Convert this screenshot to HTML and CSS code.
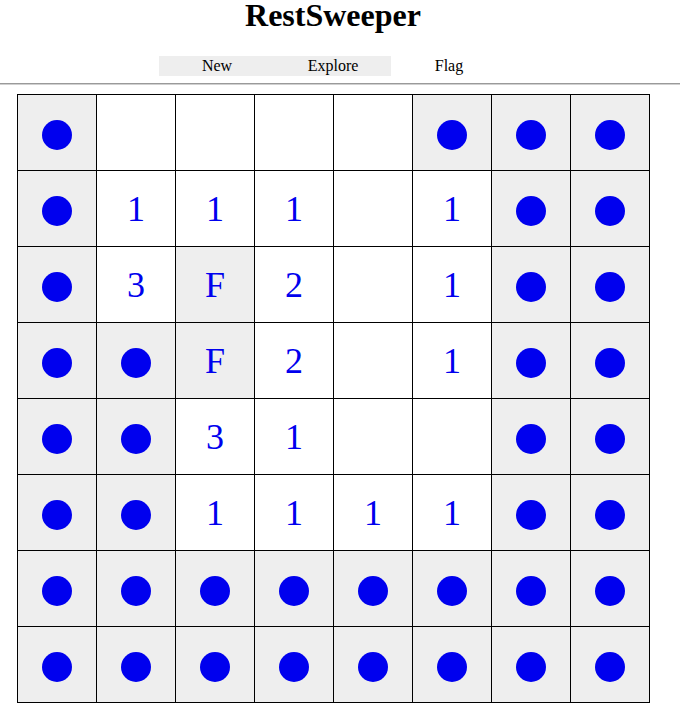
FILE: index.html
```html
<!DOCTYPE html>
<html>
<head>
<meta charset="utf-8">
<title>RestSweeper</title>
<link rel="stylesheet" href="styles.css">
</head>
<body>
<header class="top">
  <h1 class="title">RestSweeper</h1>
  <nav class="actions">
    <button class="btn btn-on">New</button>
    <button class="btn btn-on">Explore</button>
    <button class="btn">Flag</button>
  </nav>
</header>
<hr class="rule">
<main class="board">
  <div class="cell covered"><span class="dot"></span></div>
  <div class="cell"></div>
  <div class="cell"></div>
  <div class="cell"></div>
  <div class="cell"></div>
  <div class="cell covered"><span class="dot"></span></div>
  <div class="cell covered"><span class="dot"></span></div>
  <div class="cell covered"><span class="dot"></span></div>

  <div class="cell covered"><span class="dot"></span></div>
  <div class="cell">1</div>
  <div class="cell">1</div>
  <div class="cell">1</div>
  <div class="cell"></div>
  <div class="cell">1</div>
  <div class="cell covered"><span class="dot"></span></div>
  <div class="cell covered"><span class="dot"></span></div>

  <div class="cell covered"><span class="dot"></span></div>
  <div class="cell">3</div>
  <div class="cell covered">F</div>
  <div class="cell">2</div>
  <div class="cell"></div>
  <div class="cell">1</div>
  <div class="cell covered"><span class="dot"></span></div>
  <div class="cell covered"><span class="dot"></span></div>

  <div class="cell covered"><span class="dot"></span></div>
  <div class="cell covered"><span class="dot"></span></div>
  <div class="cell covered">F</div>
  <div class="cell">2</div>
  <div class="cell"></div>
  <div class="cell">1</div>
  <div class="cell covered"><span class="dot"></span></div>
  <div class="cell covered"><span class="dot"></span></div>

  <div class="cell covered"><span class="dot"></span></div>
  <div class="cell covered"><span class="dot"></span></div>
  <div class="cell">3</div>
  <div class="cell">1</div>
  <div class="cell"></div>
  <div class="cell"></div>
  <div class="cell covered"><span class="dot"></span></div>
  <div class="cell covered"><span class="dot"></span></div>

  <div class="cell covered"><span class="dot"></span></div>
  <div class="cell covered"><span class="dot"></span></div>
  <div class="cell">1</div>
  <div class="cell">1</div>
  <div class="cell">1</div>
  <div class="cell">1</div>
  <div class="cell covered"><span class="dot"></span></div>
  <div class="cell covered"><span class="dot"></span></div>

  <div class="cell covered"><span class="dot"></span></div>
  <div class="cell covered"><span class="dot"></span></div>
  <div class="cell covered"><span class="dot"></span></div>
  <div class="cell covered"><span class="dot"></span></div>
  <div class="cell covered"><span class="dot"></span></div>
  <div class="cell covered"><span class="dot"></span></div>
  <div class="cell covered"><span class="dot"></span></div>
  <div class="cell covered"><span class="dot"></span></div>

  <div class="cell covered"><span class="dot"></span></div>
  <div class="cell covered"><span class="dot"></span></div>
  <div class="cell covered"><span class="dot"></span></div>
  <div class="cell covered"><span class="dot"></span></div>
  <div class="cell covered"><span class="dot"></span></div>
  <div class="cell covered"><span class="dot"></span></div>
  <div class="cell covered"><span class="dot"></span></div>
  <div class="cell covered"><span class="dot"></span></div>
</main>
</body>
</html>
```
FILE: styles.css
```css
html, body {
  margin: 0;
  padding: 0;
  background: #fff;
  font-family: "Liberation Serif", "Times New Roman", serif;
  color: #000;
}

.top {
  width: 666px;
  display: flex;
  flex-direction: column;
  align-items: center;
}

.title {
  margin: 0;
  font-size: 32px;
  line-height: 30px;
  font-weight: bold;
}

.actions {
  display: flex;
  margin-top: 26px;
}

.btn {
  width: 116px;
  height: 20px;
  padding: 0;
  margin: 0;
  border: none;
  background: transparent;
  font-family: "Liberation Serif", "Times New Roman", serif;
  font-size: 16px;
  line-height: 20px;
  color: #000;
}

.btn-on {
  background: #eeeeee;
}

.rule {
  margin: 7px 0 0 0;
  height: 0;
  border: none;
  border-top: 1px solid #9a9a9a;
  border-bottom: 1px solid #d0d0d0;
}

.board {
  margin: 9px 0 0 17px;
  width: 633px;
  box-sizing: border-box;
  display: grid;
  grid-template-columns: repeat(8, 78px);
  grid-auto-rows: 75px;
  gap: 1px;
  padding: 1px;
  background: #000;
}

.cell {
  background: #fff;
  display: flex;
  align-items: center;
  justify-content: center;
  color: #0000ee;
  font-size: 36px;
  line-height: 1;
}

.covered {
  background: #eeeeee;
}

.dot {
  width: 30px;
  height: 30px;
  border-radius: 50%;
  background: #0000ee;
  margin-top: 5px;
}
```
